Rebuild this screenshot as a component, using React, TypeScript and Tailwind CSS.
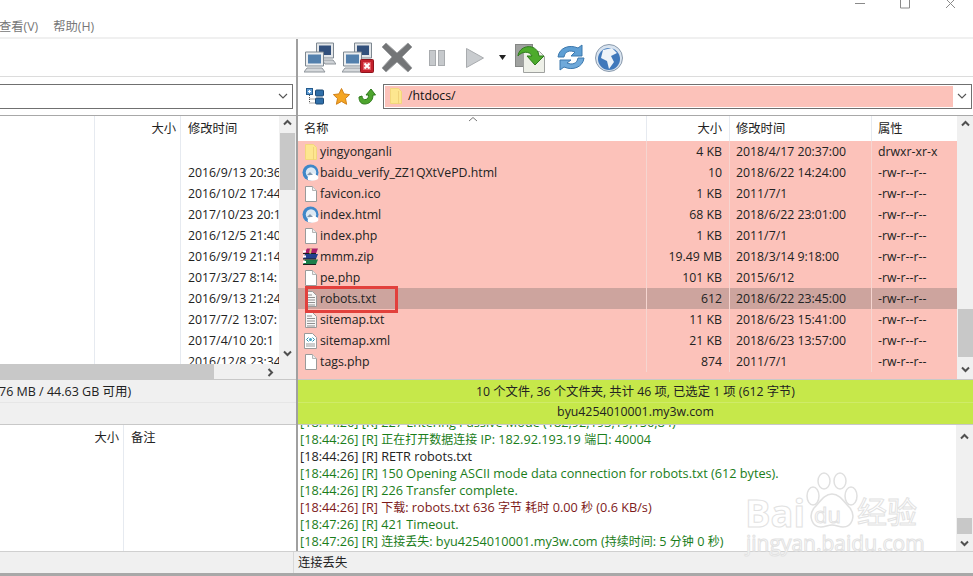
import React from 'react';

const font = { fontFamily: '"Open Sans", "Noto Sans CJK SC", sans-serif' };

const FileIcon = () => (
  <svg width="12" height="16" viewBox="0 0 12 16">
    <path d="M.5.5h7l4 4v11H.5z" fill="#fff" stroke="#9a9a9a" />
    <path d="M7.500.5v4h4" fill="#eee" stroke="#b4b4b4" />
  </svg>
);

const TextIcon = () => (
  <svg width="12" height="16" viewBox="0 0 12 16">
    <path d="M.5.5h7l4 4v11H.5z" fill="#f7f7f7" stroke="#9a9a9a" />
    <path d="M2 4h5M2 6.500h8M2 9h8M2 11.500h8M2 14h8" stroke="#8f8f8f" />
  </svg>
);

const XmlIcon = () => (
  <svg width="13" height="16" viewBox="0 0 13 16">
    <path d="M.5.5h8l4 4v11H.5z" fill="#fff" stroke="#9a9a9a" />
    <path d="M4.500 4.500L2.500 6.500l2 2M8.500 4.500l2 2-2 2" fill="none" stroke="#2f93b0" />
    <circle cx="6.500" cy="6.500" r="1.500" fill="#43a0c0" />
    <path d="M2 11h9M2 13h9" stroke="#9a9a9a" />
  </svg>
);

const FolderIcon = () => (
  <svg width="12" height="16" viewBox="0 0 12 16">
    <path d="M.5.5h8l3 3v12H.5z" fill="#fde68f" stroke="#f3d77c" />
    <path d="M8.500 3v13" stroke="#f0d27a" />
  </svg>
);

const HtmlIcon = () => (
  <svg width="17" height="17" viewBox="0 0 17 17">
    <circle cx="8.500" cy="8.500" r="8" fill="#3f87c8" />
    <circle cx="9" cy="8.500" r="5.200" fill="#dce9f4" />
    <path d="M6 16c-1-2 0-4 2-4 1-3 5-3 6-1 2 0 3 2 2 4-3 2-7 2-10 1z" fill="#fff" />
    <path d="M5 11l3-3 3 3z" fill="#8296ab" />
  </svg>
);

const ZipIcon = () => (
  <svg width="17" height="17" viewBox="0 0 17 17">
    <path d="M5 .5h11l-2 5H2z" fill="#a81d6a" />
    <path d="M3 6h13l-2 5H1z" fill="#23408f" />
    <path d="M3 11.500h13l-2 5H1z" fill="#1a7f4b" />
    <path d="M1 5.500h13M1 11h13M1 16.500h13" stroke="#1d1d1d" />
    <path d="M1 3.500h3M1 8.500h3M1 14h3" stroke="#fff" strokeWidth="2" />
    <path d="M9 .5l-1 5" stroke="#dcbb72" strokeWidth="2" />
  </svg>
);

const icons: Record<string, React.ReactNode> = {
  folder: <FolderIcon />,
  html: <HtmlIcon />,
  file: <FileIcon />,
  zip: <ZipIcon />,
  text: <TextIcon />,
  xml: <XmlIcon />,
};

const Server = ({ bad }: { bad?: boolean }) => (
  <svg width="32" height="31" viewBox="0 0 32 31">
    <path d="M12.500 1h17v15h-17z" fill="#e3e6e9" stroke="#7d8790" />
    <rect x="15" y="3.500" width="12" height="9.500" fill="#32507c" />
    <path d="M18 18h11l3 4H21z" fill="#ced2d6" stroke="#8f959b" />
    <path d="M1.500 10h18v14h-18z" fill="#eceef0" stroke="#7d8790" />
    <rect x="4" y="12.500" width="13" height="9" fill="#5380ad" />
    <path d="M3 26h15l3 4H0z" fill="#d6d9dc" stroke="#8f959b" />
    {bad && (
      <g>
        <rect x="18.500" y="17.500" width="13" height="13" rx="1" fill="#c4202c" stroke="#8e141d" />
        <rect x="21" y="20" width="8" height="8" fill="#e05a62" />
        <path d="M22.500 21.500l5 5M27.500 21.500l-5 5" stroke="#fff" strokeWidth="2" />
      </g>
    )}
  </svg>
);

const Toolbar = () => (
  <div className="h-[38px] flex items-center pl-[6px] border-b border-[#dcdcdc]">
    <Server />
    <div className="ml-[6px]"><Server bad /></div>
    <svg className="ml-[7px]" width="32" height="31" viewBox="0 0 32 31">
      <path d="M5 1l11 10L27 1l4 4-10 10 10 11-4 4-11-10L5 30l-4-4 10-11L1 5z" fill="#737577" stroke="#a0a2a4" />
    </svg>
    <svg className="ml-[16px]" width="16" height="16" viewBox="0 0 16 16">
      <rect x=".5" y=".5" width="6" height="15" fill="#c6c9cc" stroke="#a8abae" />
      <rect x="9.500" y=".5" width="6" height="15" fill="#c6c9cc" stroke="#a8abae" />
    </svg>
    <svg className="ml-[21px]" width="18" height="20" viewBox="0 0 18 20">
      <path d="M.5.5L17.500 10 .5 19.500z" fill="#c9cccf" stroke="#a8abae" />
    </svg>
    <svg className="ml-[15px]" width="7" height="5" viewBox="0 0 7 5">
      <path d="M0 0h7L3.500 5z" fill="#222" />
    </svg>
    <svg className="ml-[9px]" width="31" height="30" viewBox="0 0 31 30">
      <rect x=".5" y="1.500" width="17" height="22" fill="#a0a2a0" stroke="#858785" />
      <path d="M8.500 8.500h16l5 5v16h-21z" fill="#eef0e8" stroke="#a0a2a0" />
      <path d="M3 13C4 3 18 0 23 9l1 4h5l-9 9-8-9h5c-2-5-10-5-14 0z" fill="#4dab2c" stroke="#2d7a1b" />
    </svg>
    <svg className="ml-[10px]" width="30" height="30" viewBox="0 0 30 30">
      <path d="M2 14C3 5 13 1 22 5l4-3v11H15l4-4c-5-2-10-1-11 5z" fill="#5f9fd4" stroke="#3d78ad" />
      <path d="M28 15c-1 9-11 13-20 9l-4 3V17h11l-4 3c5 2 10 1 11-5z" fill="#6fa9da" stroke="#3d78ad" />
    </svg>
    <svg className="ml-[9px]" width="28" height="28" viewBox="0 0 28 28">
      <circle cx="14" cy="14" r="13.500" fill="#d8e3ef" stroke="#8a9aac" />
      <circle cx="14" cy="15" r="11" fill="#3f78bb" />
      <path d="M8 6l9-2 5 5-6 3 3 6-5 7-2-8-6-3z" fill="#eef3f8" />
    </svg>
  </div>
);

const AddressBar = ({ children, pink }: { children?: React.ReactNode; pink?: boolean }) => (
  <div className="flex-1 h-[25px] border border-[#707070] bg-white flex items-stretch p-[1px]">
    <div className={`flex-1 flex items-center ${pink ? 'bg-[#fcc2ba]' : ''}`}>{children}</div>
    <div className="w-[17px] flex items-center justify-center">
      <svg width="10" height="6" viewBox="0 0 10 6">
        <path d="M1 1l4 4 4-4" fill="none" stroke="#555" strokeWidth="1.100" />
      </svg>
    </div>
  </div>
);

const Arrow = ({ d }: { d: string }) => (
  <svg width="9" height="7" viewBox="0 0 9 7">
    <path d={d} fill="none" stroke="#505050" strokeWidth="2" />
  </svg>
);

const Up = () => <Arrow d="M1 5.500l3.500-3.500L8 5.500" />;
const Down = () => <Arrow d="M1 1.500L4.500 5 8 1.500" />;

// nudges a label 1px down inside a centered row
const T = ({ children }: { children: React.ReactNode }) => <span className="pt-[2px]">{children}</span>;

const localDates = [
  '2016/9/13 20:36',
  '2016/10/2 17:44',
  '2017/10/23 20:1',
  '2016/12/5 21:40',
  '2016/9/19 21:14',
  '2017/3/27 8:14:',
  '2016/9/13 21:24',
  '2017/7/2 13:07:',
  '2017/4/10 20:1',
  '2016/12/8 23:34',
];

const remoteFiles = [
  ['folder', 'yingyonganli', '4 KB', '2018/4/17 20:37:00', 'drwxr-xr-x'],
  ['html', 'baidu_verify_ZZ1QXtVePD.html', '10', '2018/6/22 14:24:00', '-rw-r--r--'],
  ['file', 'favicon.ico', '1 KB', '2011/7/1', '-rw-r--r--'],
  ['html', 'index.html', '68 KB', '2018/6/22 23:01:00', '-rw-r--r--'],
  ['file', 'index.php', '1 KB', '2011/7/1', '-rw-r--r--'],
  ['zip', 'mmm.zip', '19.49 MB', '2018/3/14 9:18:00', '-rw-r--r--'],
  ['file', 'pe.php', '101 KB', '2015/6/12', '-rw-r--r--'],
  ['text', 'robots.txt', '612', '2018/6/22 23:45:00', '-rw-r--r--'],
  ['text', 'sitemap.txt', '11 KB', '2018/6/23 15:41:00', '-rw-r--r--'],
  ['xml', 'sitemap.xml', '21 KB', '2018/6/23 13:57:00', '-rw-r--r--'],
  ['file', 'tags.php', '874', '2011/7/1', '-rw-r--r--'],
];

const logLines: [string, string][] = [
  ['[18:44:26] [R] 227 Entering Passive Mode (182,92,193,19,156,84)', 'text-[#1a7d1a]'],
  ['[18:44:26] [R] 正在打开数据连接 IP: 182.92.193.19 端口: 40004', 'text-[#1a7d1a]'],
  ['[18:44:26] [R] RETR robots.txt', 'text-[#222]'],
  ['[18:44:26] [R] 150 Opening ASCII mode data connection for robots.txt (612 bytes).', 'text-[#1a7d1a]'],
  ['[18:44:26] [R] 226 Transfer complete.', 'text-[#1a7d1a]'],
  ['[18:44:26] [R] 下载: robots.txt 636 字节 耗时 0.00 秒 (0.6 KB/s)', 'text-[#7d1a1a]'],
  ['[18:47:26] [R] 421 Timeout.', 'text-[#1a7d1a]'],
  ['[18:47:26] [R] 连接丢失: byu4254010001.my3w.com (持续时间: 5 分钟 0 秒)', 'text-[#1a7d1a]'],
];

// Chinese runs in the log are narrower than the latin text around them
const LogLine = ({ text, color }: { text: string; color: string }) => (
  <div className={color}>
    {text.split(/([\u4e00-\u9fff]+)/).map((part, i) =>
      i % 2 ? <span key={i} className="text-[12px]">{part}</span> : part
    )}
  </div>
);

const LeftPane = () => (
  <div className="w-[296px] flex flex-col">
    <div className="h-[38px] border-b border-[#dcdcdc]" />
    <div className="h-[39px] flex items-center pr-[3px] border-b border-[#a8a8a8]">
      <div className="flex-1 -ml-[2px] flex"><AddressBar /></div>
    </div>
    <div className="h-[263px] flex relative overflow-hidden">
      <div className="w-[279px] flex overflow-hidden">
        <div className="w-[95px] border-r border-[#e6eaf0]" />
        <div className="w-[86px] border-r border-[#e6eaf0] pr-[4px] pt-[4px] text-right text-[#222]">大小</div>
        <div className="flex-1 pl-[7px] pt-[4px] text-[#222] whitespace-nowrap overflow-hidden">
          <div className="h-[42px]">修改时间</div>
          {localDates.map(d => (
            <div key={d} className="h-[21px] leading-[21px]">{d}</div>
          ))}
        </div>
      </div>
      <div className="w-[17px] bg-[#f0f0f0] flex flex-col items-center pt-[3px]">
        <Up />
        <div className="w-[15px] h-[57px] bg-[#c8c8c8] mt-[7px]" />
        <div className="flex-1" />
        <div className="mb-[22px]"><Down /></div>
      </div>
      <div className="absolute left-0 bottom-0 w-[296px] h-[15px] bg-[#f0f0f0]">
        <div className="h-full w-[214px] bg-[#c8c8c8]" />
        <svg className="absolute left-[267px] top-[4px]" width="7" height="9" viewBox="0 0 7 9">
          <path d="M1.500 1L5 4.500 1.500 8" fill="none" stroke="#505050" strokeWidth="2" />
        </svg>
      </div>
    </div>
    <div className="h-[46px] bg-[#f0f0f0] border-y border-[#c8c8c8] flex flex-col">
      <div className="h-[23px] pt-[2px] flex items-center -ml-[1px] text-[12.500px] text-[#222] border-b border-[#e6e6e6]">76 MB / 44.63 GB 可用)</div>
    </div>
  </div>
);

const RightPane = () => (
  <div className="flex-1 flex flex-col min-w-0">
    <Toolbar />
    <div className="h-[39px] flex items-center pl-[8px] pr-[1px] border-b border-[#a8a8a8]">
      <svg width="18" height="17" viewBox="0 0 18 17">
        <rect x=".5" y=".5" width="6" height="6" fill="#5d9bd4" stroke="#235a8c" />
        <path d="M2 3.500h3M3.500 2v3" stroke="#fff" />
        <path d="M3.500 7v8h5M3.500 11h5" stroke="#555" strokeDasharray="1 1" fill="none" />
        <rect x="9.500" y="2" width="8" height="6" rx="1" fill="#2f6ea8" stroke="#1d4a75" />
        <rect x="9.500" y="10" width="8" height="6" rx="1" fill="#2f6ea8" stroke="#1d4a75" />
      </svg>
      <svg className="ml-[9px]" width="17" height="17" viewBox="0 0 17 17">
        <path d="M8.500.5l2.500 5.400 5.600.7-4.100 3.900 1.100 5.800-5.100-2.900-5.100 2.900 1.100-5.800L.4 6.600 6 5.900z" fill="#f5a623" stroke="#d0801a" />
      </svg>
      <svg className="ml-[8px]" width="18" height="17" viewBox="0 0 18 17">
        <path d="M13 1l4.500 6H15c0 6-4 9-8.500 9S1 12 1 9l3-1c0 3 2 4 4 3.500S10.500 9 10.500 7H8z" fill="#4ea52e" stroke="#2f7a1b" />
      </svg>
      <div className="flex-1 ml-[7px] flex">
        <AddressBar pink>
          <div className="ml-[5px]"><FolderIcon /></div>
          <span className="ml-[6px] text-[#111]">/htdocs/</span>
        </AddressBar>
      </div>
    </div>
    <div className="h-[263px] flex relative">
      <div className="w-[659px] flex flex-col">
        <div className="h-[25px] flex items-center text-[#222] relative">
          <div className="w-[349px] pl-[6px] h-full flex items-center border-r border-[#e6eaf0]"><T>名称</T></div>
          <div className="w-[83px] pr-[7px] h-full flex items-center justify-end border-r border-[#e6eaf0]"><T>大小</T></div>
          <div className="w-[142px] pl-[6px] h-full flex items-center border-r border-[#e6eaf0]"><T>修改时间</T></div>
          <div className="flex-1 pl-[6px] h-full flex items-center"><T>属性</T></div>
          <svg className="absolute left-[170px] top-0" width="10" height="6" viewBox="0 0 10 6">
            <path d="M1 5l4-3.500L9 5" fill="none" stroke="#777" />
          </svg>
        </div>
        <div className="flex-1 bg-[#fcc2ba]">
          {remoteFiles.map(([icon, name, size, date, attr]) => (
            <div key={name} className={`h-[21px] flex items-center text-[#222] ${name === 'robots.txt' ? 'bg-[#cda49e]' : ''}`}>
              <div className="w-[349px] pl-[4px] h-full flex items-center border-r border-[#f5d5d0]">
                <div className="w-[17px] flex justify-center">{icons[icon]}</div>
                <span className="ml-[1px] pt-[2px]">{name}</span>
              </div>
              <div className="w-[83px] pr-[7px] h-full flex items-center justify-end border-r border-[#f5d5d0]"><T>{size}</T></div>
              <div className="w-[142px] pl-[6px] h-full flex items-center border-r border-[#f5d5d0]"><T>{date}</T></div>
              <div className="flex-1 pl-[6px] h-full flex items-center"><T>{attr}</T></div>
            </div>
          ))}
        </div>
      </div>
      <div className="flex-1 bg-[#f0f0f0] flex flex-col items-center pt-[4px] pb-[6px]">
        <Up />
        <div className="w-[15px] h-[48px] bg-[#c8c8c8] mt-[182px]" />
        <div className="flex-1" />
        <Down />
      </div>
      <div className="absolute left-[7px] top-[170px] w-[93px] h-[27px] border-[3px] border-[#e2403c]" />
    </div>
    <div className="h-[46px] bg-[#c6e84a] border-y border-[#c8c8c8] text-[#222] flex flex-col">
      <div className="h-[23px] pt-[3px] flex items-center justify-center border-b border-[#cfeb68]">10 个文件, 36 个文件夹, 共计 46 项, 已选定 1 项 (612 字节)</div>
      <div className="h-[17px] pt-[1px] flex items-center justify-center">byu4254010001.my3w.com</div>
    </div>
  </div>
);

const Watermark = () => (
  <div className="absolute left-[745px] top-[472px] w-[180px] h-[82px] text-white leading-none pointer-events-none [-webkit-text-stroke:1px_#e2e2e2]">
    <svg className="absolute left-[60px] top-0" width="54" height="58" viewBox="0 0 54 58">
      <g fill="#fff" stroke="#e0e0e0" strokeWidth="1.500">
        <ellipse cx="8" cy="24" rx="6" ry="9" />
        <ellipse cx="19" cy="9" rx="6" ry="8" />
        <ellipse cx="35" cy="9" rx="6" ry="8" />
        <ellipse cx="46" cy="24" rx="6" ry="9" />
        <path d="M27 22c8 0 12 8 18 14 6 8 2 19-7 19-4 0-7-2-11-2s-7 2-11 2c-9 0-13-11-7-19 6-6 10-14 18-14z" />
      </g>
    </svg>
    <span className="absolute left-0 top-[21px] text-[38px] font-bold">Bai</span>
    <span className="absolute left-[69px] top-[31px] text-[22px]">du</span>
    <span className="absolute left-[112px] top-[25px] text-[30px]">经验</span>
    <span className="absolute left-[1px] top-[61px] text-[21px]">jingyan.baidu.com</span>
  </div>
);

export default function App() {
  return (
    <div className="relative w-[973px] h-[576px] overflow-hidden bg-white text-[12.300px]" style={font}>
      {/* Title bar */}
      <div className="h-[37px]">
        <div className="h-[18px] relative overflow-hidden">
          <svg className="absolute left-[854px] -top-[1px]" width="104" height="10" viewBox="0 0 104 10">
            <path d="M1 4.500h10" stroke="#8a8a8a" />
            <path d="M46.500-3h9v12h-9z" fill="none" stroke="#8a8a8a" />
            <path d="M92 0l9 9M101 0l-9 9" stroke="#8a8a8a" />
          </svg>
        </div>
        <div className="h-[19px] flex items-center -ml-[1px] text-[#777]">
          <span>查看(V)</span>
          <span className="ml-[15px]">帮助(H)</span>
        </div>
      </div>
      <div className="h-[2px] bg-[#f0f0f0]" />

      <div className="flex">
        <LeftPane />
        <div className="w-[2px] bg-[#a0a0a0]" />
        <RightPane />
      </div>

      {/* Log area */}
      <div className="h-[127px] flex -mt-[1px] border-t border-[#a8a8a8]">
        <div className="w-[296px] flex text-[#222]">
          <div className="w-[124px] pr-[4px] pt-[4px] text-right border-r border-[#e6eaf0]">大小</div>
          <div className="flex-1 pl-[7px] pt-[4px]">备注</div>
        </div>
        <div className="w-[2px] bg-[#a0a0a0]" />
        <div className="w-[658px] overflow-hidden pl-[2px] leading-[17px] text-[12.700px] whitespace-nowrap">
          <div className="-mt-[11px]">
            {logLines.map(([t, c]) => (
              <LogLine key={t} text={t} color={c} />
            ))}
          </div>
        </div>
        <div className="flex-1 bg-[#f0f0f0] flex flex-col items-center pt-[8px] pb-[4px]">
          <Up />
          <div className="flex-1" />
          <div className="w-[15px] h-[16px] bg-[#c8c8c8] mb-[6px]" />
          <Down />
        </div>
      </div>

      {/* Status bar */}
      <div className="h-[22px] bg-[#f0f0f0] border-t border-[#d0d0d0] flex items-center">
        <div className="w-[294px] h-full border-r border-[#d8d8d8]" />
        <span className="ml-[4px] pt-[2px] text-[#222]">连接丢失</span>
      </div>
      <div className="h-[3px] bg-[#a8a8a8]" />

      <Watermark />
    </div>
  );
}
